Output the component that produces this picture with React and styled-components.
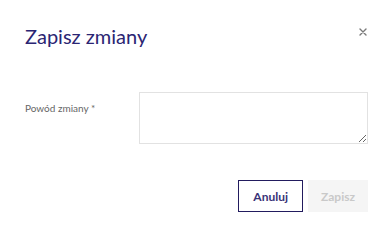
import React from "react";
import styled, { createGlobalStyle } from "styled-components";

const GlobalStyle = createGlobalStyle`
  body {
    margin: 0;
    background: #ffffff;
    font-family: Lato, "Liberation Sans", sans-serif;
  }
`;

const App = () => {
  return (
    <>
      <GlobalStyle />
      <SModal>
        <SHeader>
          <STitle>Zapisz zmiany</STitle>
          <SClose aria-label="Zamknij">
            <svg width="8" height="8" viewBox="0 0 8 8">
              <path d="M1 1 L7 7 M7 1 L1 7" stroke="#7a7a7a" strokeWidth="1.4" strokeLinecap="round" />
            </svg>
          </SClose>
        </SHeader>

        <SFormRow>
          <SLabel>Powód zmiany *</SLabel>
          <STextarea />
        </SFormRow>

        <SFooter>
          <SButton variant="outline">Anuluj</SButton>
          <SButton variant="disabled" disabled>Zapisz</SButton>
        </SFooter>
      </SModal>
    </>
  );
};

const SModal = styled.div`
  width: 391px;
  box-sizing: border-box;
  padding: 24px 23px 24px 25px;
`;

const SHeader = styled.div`
  display: flex;
  justify-content: space-between;
  align-items: flex-start;
`;

const STitle = styled.h2`
  margin: 0;
  font-family: Lato, "Liberation Sans", sans-serif;
  font-weight: 400;
  font-size: 20px;
  line-height: 24px;
  color: #2b2573;
`;

const SClose = styled.button`
  display: flex;
  margin: 4px 1px 0 0;
  padding: 0;
  border: none;
  background: none;
  cursor: pointer;
`;

const SFormRow = styled.div`
  display: grid;
  grid-template-columns: 114px 1fr;
  margin-top: 44px;
`;

const SLabel = styled.label`
  padding-top: 8px;
  font-size: 10px;
  line-height: 16px;
  color: #666666;
`;

const STextarea = styled.textarea`
  box-sizing: border-box;
  width: 229px;
  height: 52px;
  border: 1px solid #e2e2e2;
  border-radius: 0;
  outline: none;
  font-family: inherit;
`;

const SFooter = styled.div`
  display: flex;
  justify-content: flex-end;
  gap: 5px;
  margin-top: 36px;
`;

const SButton = styled.button`
  height: 32px;
  box-sizing: border-box;
  font-family: Lato, "Liberation Sans", sans-serif;
  font-weight: 700;
  font-size: 12px;
  border-radius: 0;
  cursor: ${(props) => (props.variant === "disabled" ? "default" : "pointer")};
  padding: ${(props) => (props.variant === "disabled" ? "0 13px" : "0 14px")};
  border: ${(props) => (props.variant === "disabled" ? "none" : "1px solid #221b5e")};
  background: ${(props) => (props.variant === "disabled" ? "#f5f5f5" : "#ffffff")};
  color: ${(props) => (props.variant === "disabled" ? "#c9c9c9" : "#3a3378")};
`;

export default App;
